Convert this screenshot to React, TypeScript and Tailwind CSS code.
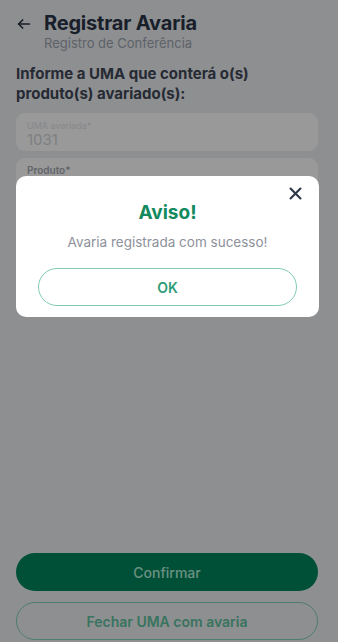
import React from 'react';

const font = { fontFamily: 'Inter, "Noto Sans", sans-serif' };

const App: React.FC = () => {
  return (
    <div className="relative h-[642px] w-full overflow-hidden bg-[#edeff2]" style={font}>
      {/* Página */}
      <div className="flex h-full flex-col pl-4 pr-[20px]">
        <div className="flex items-start gap-3 pt-[11px]">
          <svg className="mt-[5px] h-[16px] w-[16px] text-[#2b3547]" viewBox="0 0 24 24" fill="none" stroke="currentColor" strokeWidth="2.6" strokeLinecap="round" strokeLinejoin="round">
            <path d="M20 12H4" />
            <path d="M10 6l-6 6 6 6" />
          </svg>
          <div className="flex flex-col">
            <h1 className="text-[20px] font-bold leading-[24px] tracking-[-0.2px] text-[#2b3547]">Registrar Avaria</h1>
            <p className="text-[13px] leading-[17px] text-[#9ca3af]">Registro de Conferência</p>
          </div>
        </div>

        <p className="mt-[12px] text-[15px] font-bold leading-[20px] text-[#3f4656]">
          Informe a UMA que conterá o(s) produto(s) avariado(s):
        </p>

        <div className="mt-[9px] flex h-[38px] flex-col justify-center rounded-[9px] bg-white px-[11px] pt-[3px]">
          <span className="text-[9px] leading-[11px] text-[#e0e3e8]">UMA avariada*</span>
          <span className="text-[15px] leading-[17px] text-[#d2d5db]">1031</span>
        </div>

        <div className="mt-[7px] flex h-[38px] flex-col rounded-[9px] bg-white px-[11px] pt-[6px]">
          <span className="text-[10px] font-semibold leading-[12px] text-[#a2a8b0]">Produto*</span>
        </div>

        <div className="flex-1" />

        <div className="flex flex-col gap-[11px] pb-[2px]">
          <button className="h-[38px] w-full rounded-full bg-[#00855d] text-[14px] font-medium text-[#b0f0d8]">
            Confirmar
          </button>
          <button className="h-[38px] w-full rounded-full border-[1.5px] border-[#7fd3b2] text-[14px] font-semibold text-[#5fc19d]">
            Fechar UMA com avaria
          </button>
        </div>
      </div>

      {/* Overlay + modal */}
      <div className="absolute inset-0 flex items-start justify-center bg-black/40 pl-4 pr-[19px] pt-[176px]">
        <div className="relative flex w-full flex-col items-center rounded-[10px] bg-white px-[22px] pb-[11px] pt-[25px]">
          <button className="absolute right-[15px] top-[9px] text-[#2d3748]">
            <svg className="h-[17px] w-[17px]" viewBox="0 0 24 24" fill="none" stroke="currentColor" strokeWidth="3" strokeLinecap="round">
              <path d="M5 5l14 14" />
              <path d="M19 5L5 19" />
            </svg>
          </button>
          <h2 className="text-[19px] font-bold leading-[24px] text-[#138a5e]">Aviso!</h2>
          <p className="mt-[8px] text-[13.5px] leading-[18px] text-[#8d919b]">Avaria registrada com sucesso!</p>
          <button className="mt-[17px] h-[38px] w-full rounded-full border-[1.5px] border-[#80ccb1] text-[14px] font-semibold text-[#2f9c78]">
            OK
          </button>
        </div>
      </div>
    </div>
  );
};

export default App;
